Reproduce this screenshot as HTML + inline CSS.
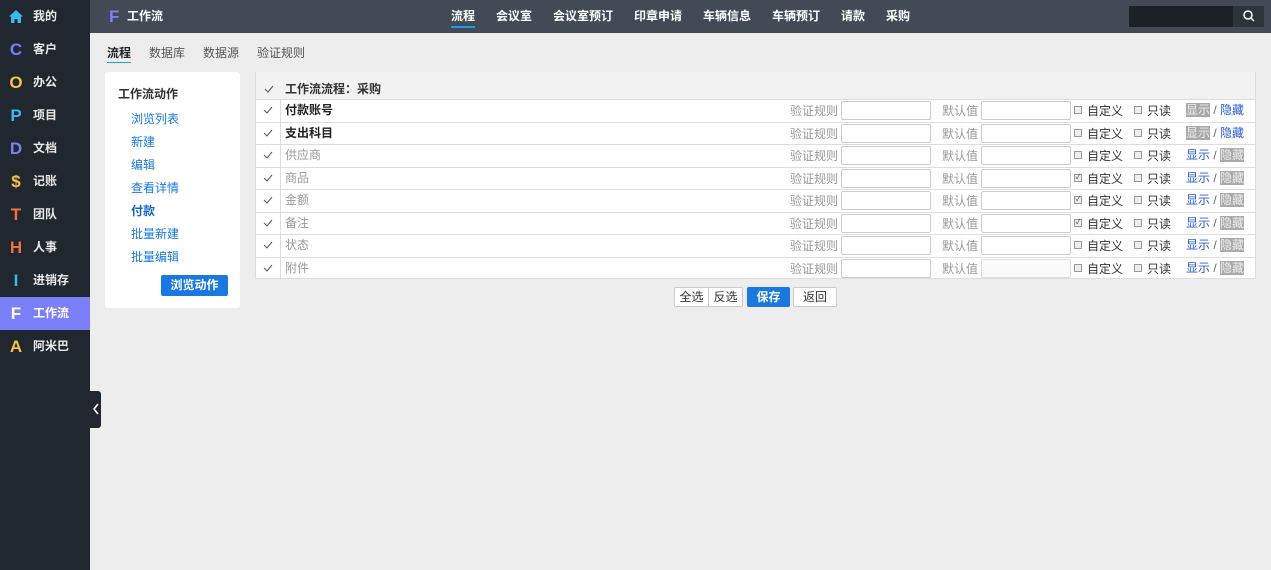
<!DOCTYPE html>
<html><head><meta charset="utf-8"><style>
*{box-sizing:border-box;margin:0;padding:0}
body{width:1271px;height:570px;overflow:hidden;background:#ededed;font-family:"Liberation Sans","Noto Sans CJK SC",sans-serif;font-size:12px;color:#333;position:relative}
.side{position:absolute;left:0;top:0;width:90px;height:570px;background:#21272f}
.si{position:absolute;left:0;width:90px;height:33px;color:#e8e8e8;font-weight:bold;font-size:12px;line-height:33px}
.si b{position:absolute;left:9px;width:14px;text-align:center;font-size:17px;font-family:"Liberation Sans",sans-serif}
.si span{position:absolute;left:33px}
.si.act{background:#7b7ff8;color:#fff}
.top{position:absolute;left:90px;top:0;width:1181px;height:33px;background:#424b55}
.nav{position:absolute;top:0;color:#fff;font-weight:bold;font-size:12px;line-height:33px}
.tabs{position:absolute;top:44px;font-size:12px;color:#555}
.panel{position:absolute;left:105px;top:72px;width:135px;height:236px;background:#fff;border-radius:3px}
.pl{position:absolute;left:26px;color:#1a78e0;font-size:12px}
.tbl{position:absolute;left:255px;top:72px;width:1001px;height:207px;background:#fff;border:1px solid #ddd}
.row{position:absolute;left:0;width:999px;height:23px;border-top:1px solid #ddd;line-height:20px}
.ck{position:absolute;left:0;top:0;width:25px;height:100%;border-right:1px solid #ddd;text-align:center}
.ck svg{margin-top:6px}
.nm{position:absolute;left:29px;top:0}
.lb{position:absolute;top:1px;color:#999}
.in{position:absolute;top:1px;width:90px;height:19px;border:1px solid #ccc;border-radius:2px;background:#fff}
.cb{position:absolute;top:6px;width:8px;height:8px;border:1px solid #999;background:#eee;font-size:7px;line-height:6px;text-align:center}
.tx{position:absolute;top:1px;color:#333}
.lk{position:absolute;left:930px;top:0;color:#2a5cd0}
.g{background:#a9a9a9;color:#eee}
.btn{position:absolute;top:287px;height:20px;border:1px solid #ccc;background:#fff;line-height:18px;text-align:center;font-size:12px;color:#333;border-radius:2px}
</style></head><body>
<div class="side">
<div class="si" style="top:0"><b><svg width="14" height="13" viewBox="0 0 14 13" style="margin-top:10px"><path d="M7 0L0 6.5h2V13h3.5V9h3v4H12V6.5h2z" fill="#3ab8ef"/></svg></b><span>我的</span></div>
<div class="si" style="top:33px"><b style="color:#7b7ff8">C</b><span>客户</span></div>
<div class="si" style="top:66px"><b style="color:#f5c542">O</b><span>办公</span></div>
<div class="si" style="top:99px"><b style="color:#3ab8ef">P</b><span>项目</span></div>
<div class="si" style="top:132px"><b style="color:#7b7ff8">D</b><span>文档</span></div>
<div class="si" style="top:165px"><b style="color:#f5c542">$</b><span>记账</span></div>
<div class="si" style="top:198px"><b style="color:#f07040">T</b><span>团队</span></div>
<div class="si" style="top:231px"><b style="color:#f07040">H</b><span>人事</span></div>
<div class="si" style="top:264px"><b style="color:#3ab8ef">I</b><span>进销存</span></div>
<div class="si act" style="top:297px"><b style="color:#fff">F</b><span>工作流</span></div>
<div class="si" style="top:330px"><b style="color:#f5c542">A</b><span>阿米巴</span></div>
</div>
<div style="position:absolute;left:90px;top:391px;width:11px;height:37px;background:#21272f;border-radius:0 3px 3px 0;text-align:center"><svg width="8" height="12" viewBox="0 0 8 12" style="margin-top:12px"><path d="M6 1L2 6l4 5" fill="none" stroke="#fff" stroke-width="1.6"/></svg></div>
<div class="top">
<div class="nav" style="left:19px;color:#7b7ff8;font-size:17px">F</div>
<div class="nav" style="left:37px">工作流</div>
</div>
<div class="nav" style="left:451px">流程</div>
<div style="position:absolute;left:451px;top:26px;width:24px;height:2px;background:#1a9ff0"></div>
<div class="nav" style="left:496px">会议室</div>
<div class="nav" style="left:553px">会议室预订</div>
<div class="nav" style="left:634px">印章申请</div>
<div class="nav" style="left:703px">车辆信息</div>
<div class="nav" style="left:772px">车辆预订</div>
<div class="nav" style="left:841px">请款</div>
<div class="nav" style="left:886px">采购</div>
<div style="position:absolute;left:1129px;top:6px;width:104px;height:21px;background:#1c2128"></div>
<div style="position:absolute;left:1233px;top:6px;width:31px;height:21px;background:#2d343c;color:#fff;text-align:center;line-height:21px">
<svg width="12" height="12" viewBox="0 0 12 12" style="margin-top:4px"><circle cx="5" cy="5" r="4" fill="none" stroke="#fff" stroke-width="1.5"/><path d="M8 8l3 3" stroke="#fff" stroke-width="1.5"/></svg></div>
<div class="tabs" style="left:107px;color:#222;font-weight:bold">流程</div>
<div style="position:absolute;left:107px;top:62px;width:24px;height:1px;background:#1a9ff0"></div>
<div class="tabs" style="left:149px">数据库</div>
<div class="tabs" style="left:203px">数据源</div>
<div class="tabs" style="left:257px">验证规则</div>
<div class="panel">
<div style="position:absolute;left:13px;top:13px;font-weight:bold;color:#333">工作流动作</div>
<div class="pl" style="top:38px">浏览列表</div>
<div class="pl" style="top:61px">新建</div>
<div class="pl" style="top:84px">编辑</div>
<div class="pl" style="top:107px">查看详情</div>
<div class="pl" style="top:130px;font-weight:bold;color:#1464c8">付款</div>
<div class="pl" style="top:153px">批量新建</div>
<div class="pl" style="top:176px">批量编辑</div>
<div style="position:absolute;left:56px;top:203px;width:67px;height:21px;background:#1a78e0;color:#fff;border-radius:2px;text-align:center;line-height:21px;font-weight:bold">浏览动作</div>
</div>
<div class="tbl">
<div class="row" style="top:-1px;height:27px;background:#f2f2f2;border-top:none"><div class="ck" style="border-right:none"><svg width="10" height="8" viewBox="0 0 10 8" style="margin-top:13px"><path d="M1 4l3 3 5-6" fill="none" stroke="#555" stroke-width="1"/></svg></div><div class="nm" style="top:7px;font-weight:bold">工作流流程：采购</div></div>
<div id="rows"></div>
</div>
<script>
var d=[["付款账号",1,0,0,1],["支出科目",1,0,0,1],["供应商",0,0,0,0],["商品",0,1,1,0],["金额",0,1,1,0],["备注",0,1,1,0],["状态",0,0,0,0],["附件",0,0,1,0]];
var h="";
d.forEach(function(r,i){var t=26+i*22.5;
h+='<div class="row" style="top:'+t+'px"><div class="ck"><svg width="10" height="8" viewBox="0 0 10 8"><path d="M1 4l3 3 5-6" fill="none" stroke="#555" stroke-width="1"/></svg></div><div class="nm" style="'+(r[1]?'font-weight:bold;color:#222':'color:#999')+'">'+r[0]+'</div>'+
'<div class="lb" style="left:534px">验证规则</div><div class="in" style="left:585px"></div>'+
'<div class="lb" style="left:686px">默认值</div><div class="in" style="left:725px;'+(r[3]&&!r[2]?'background:#fafafa;border-color:#ddd':'')+'"></div>'+
'<div class="cb" style="left:818px">'+(r[2]?'✓':'')+'</div><div class="tx" style="left:831px">自定义</div>'+
'<div class="cb" style="left:878px"></div><div class="tx" style="left:891px">只读</div>'+
'<div class="lk">'+(r[4]?'<span class="g">显示</span> <span style="color:#666">/</span> 隐藏':'显示 <span style="color:#666">/</span> <span class="g">隐藏</span>')+'</div></div>';});
document.getElementById("rows").innerHTML=h;
</script>
<div class="btn" style="left:674px;width:35px;border-radius:2px 0 0 2px">全选</div>
<div class="btn" style="left:708px;width:35px;border-radius:0 2px 2px 0">反选</div>
<div class="btn" style="left:747px;width:43px;background:#1a78e0;border-color:#1a78e0;color:#fff;font-weight:bold">保存</div>
<div class="btn" style="left:793px;width:44px">返回</div>
</body></html>
